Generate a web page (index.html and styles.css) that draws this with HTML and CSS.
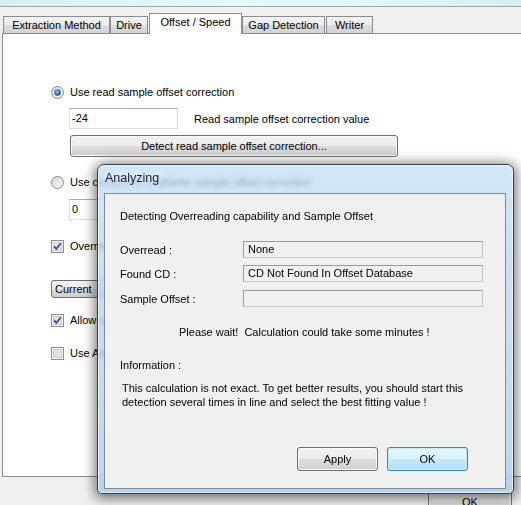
FILE: index.html
```html
<!DOCTYPE html>
<html>
<head>
<meta charset="utf-8">
<link rel="stylesheet" href="styles.css">
</head>
<body>
<div class="topbar"></div>
<div class="tabs">
  <div class="tab t1">Extraction Method</div>
  <div class="tab t2">Drive</div>
  <div class="tab sel">Offset / Speed</div>
  <div class="tab t4">Gap Detection</div>
  <div class="tab t5">Writer</div>
</div>
<div class="panel">
  <div class="row r1">
    <svg class="ico" width="13" height="13" viewBox="0 0 13 13"><defs><radialGradient id="rd" cx="45%" cy="40%" r="60%"><stop offset="0" stop-color="#9fd8ff"/><stop offset="0.6" stop-color="#2b79c9"/><stop offset="1" stop-color="#173f7e"/></radialGradient><linearGradient id="rb" x1="0" y1="0" x2="1" y2="1"><stop offset="0" stop-color="#d4d4d4"/><stop offset="1" stop-color="#fafafa"/></linearGradient></defs><circle cx="6.5" cy="6.5" r="6" fill="url(#rb)" stroke="#8a8c8e"/><circle cx="6.5" cy="6.5" r="3.2" fill="url(#rd)"/></svg>
    <span class="lbl">Use read sample offset correction</span>
  </div>
  <div class="row r2">
    <div class="input w1">-24</div>
    <span class="lbl2">Read sample offset correction value</span>
  </div>
  <div class="row r3">
    <div class="btn wide">Detect read sample offset correction...</div>
  </div>
  <div class="row r4">
    <svg class="ico" width="13" height="13" viewBox="0 0 13 13"><defs><linearGradient id="rb2" x1="0" y1="0" x2="1" y2="1"><stop offset="0" stop-color="#d4d4d4"/><stop offset="1" stop-color="#fafafa"/></linearGradient></defs><circle cx="6.5" cy="6.5" r="6" fill="url(#rb2)" stroke="#8a8c8e"/></svg>
    <span class="lbl">Use combined read/write sample offset correction</span>
  </div>
  <div class="row r5">
    <div class="input w1">0</div>
    <span class="lbl2">Combined read/write sample offset correction value</span>
  </div>
  <div class="row r6">
    <svg class="ico" width="13" height="13" viewBox="0 0 13 13"><rect x="0.5" y="0.5" width="12" height="12" fill="#f6f6f6" stroke="#8e8f8f"/><rect x="2.5" y="2.5" width="8" height="8" fill="#e4e4e4" stroke="#c9cbd0"/><path d="M3.2 6.3 L5.4 8.8 L9.8 3.3" fill="none" stroke="#3c5390" stroke-width="1.8"/></svg>
    <span class="lbl">Overread into Lead-In and Lead-Out</span>
  </div>
  <div class="row r7">
    <div class="combo">Current</div>
  </div>
  <div class="row r8">
    <svg class="ico" width="13" height="13" viewBox="0 0 13 13"><rect x="0.5" y="0.5" width="12" height="12" fill="#f6f6f6" stroke="#8e8f8f"/><rect x="2.5" y="2.5" width="8" height="8" fill="#e4e4e4" stroke="#c9cbd0"/><path d="M3.2 6.3 L5.4 8.8 L9.8 3.3" fill="none" stroke="#3c5390" stroke-width="1.8"/></svg>
    <span class="lbl">Allow speed reduction during extraction</span>
  </div>
  <div class="row r9">
    <svg class="ico" width="13" height="13" viewBox="0 0 13 13"><rect x="0.5" y="0.5" width="12" height="12" fill="#f6f6f6" stroke="#8e8f8f"/><rect x="2.5" y="2.5" width="8" height="8" fill="#e2e2e2" stroke="#c9cbd0"/></svg>
    <span class="lbl">Use AccurateRip with this drive</span>
  </div>
</div>
<div class="footer">
  <div class="btn mainok">OK</div>
</div>

<div class="dialog">
  <div class="dtitle">Analyzing</div>
  <div class="client">
    <div class="head">Detecting Overreading capability and Sample Offset</div>
    <div class="frow f1"><span class="flbl">Overread :</span><div class="field">None</div></div>
    <div class="frow f2"><span class="flbl">Found CD :</span><div class="field">CD Not Found In Offset Database</div></div>
    <div class="frow f3"><span class="flbl">Sample Offset :</span><div class="field"></div></div>
    <div class="wait">Please wait!&nbsp; Calculation could take some minutes !</div>
    <div class="info">Information :</div>
    <div class="infotext">This calculation is not exact. To get better results, you should start this<br>detection several times in line and select the best fitting value !</div>
    <div class="dbtns">
      <div class="btn dbtn">Apply</div>
      <div class="btn dbtn def">OK</div>
    </div>
  </div>
</div>
</body>
</html>
```
FILE: styles.css
```css
* { box-sizing: border-box; }
html, body { margin: 0; padding: 0; }
body {
  width: 521px; height: 505px; overflow: hidden; position: relative;
  background: #f0f0f0;
  font-family: "Liberation Sans", Arial, sans-serif;
  font-size: 11px; color: #000;
}
.topbar {
  height: 7px;
  background: linear-gradient(90deg, #d8eef0 0%, #e9f8f9 45%, #e2f5f7 70%, #d6eef2 100%);
  border-bottom: 1px solid #a3a7ab;
}
.tabs {
  display: flex; align-items: flex-end; height: 26px;
  position: relative; z-index: 2;
}
.tab {
  height: 17px; line-height: 16px; text-align: center;
  border: 1px solid #898c95; border-bottom: none;
  background: linear-gradient(#f3f3f3 0%, #ebebeb 50%, #dedede 51%, #d2d2d2 100%);
  white-space: nowrap;
}
.t1 { margin-left: 3px; width: 107px; }
.t2 { width: 38px; }
.sel {
  margin-left: 1px; width: 93px; height: 21px; margin-bottom: -1px;
  background: #fff; line-height: 17px;
}
.t4 { width: 83px; }
.t5 { margin-left: 1px; width: 47px; }
.panel {
  margin-left: 2px; width: 540px; height: 444px;
  border: 1px solid #898c95; background: #fff;
  padding-left: 48px; padding-top: 50px;
  display: flex; flex-direction: column;
}
.row { display: flex; align-items: center; white-space: nowrap; }
.ico { flex: none; }
.lbl { margin-left: 6px; }
.r1 { height: 16px; }
.r2 { margin-top: 8px; height: 21px; padding-left: 18px; }
.r3 { margin-top: 6px; height: 22px; padding-left: 19px; }
.r4 { margin-top: 17px; height: 16px; }
.r5 { margin-top: 9px; height: 21px; padding-left: 18px; }
.r6 { margin-top: 18px; height: 16px; }
.r7 { margin-top: 26px; height: 18px; }
.r8 { margin-top: 14px; height: 16px; }
.r9 { margin-top: 17px; height: 16px; }
.input {
  height: 21px; line-height: 19px; padding-left: 2px;
  border: 1px solid #dadde3; border-top-color: #abadb3;
  background: #fff;
}
.w1 { width: 109px; }
.lbl2 { margin-left: 16px; }
.btn {
  height: 22px; line-height: 20px; text-align: center;
  border: 1px solid #707070; border-radius: 3px;
  background: linear-gradient(#f2f2f2 0%, #ebebeb 50%, #dddddd 51%, #cfcfcf 100%);
  box-shadow: inset 0 0 0 1px #fbfbfb;
}
.wide { width: 328px; }
.combo {
  width: 150px; height: 18px; line-height: 16px; padding-left: 3px;
  border: 1px solid #707070; border-radius: 3px;
  background: linear-gradient(#f2f2f2 0%, #ebebeb 50%, #dddddd 51%, #cfcfcf 100%);
}
.footer { display: flex; justify-content: flex-end; padding-right: 9px; margin-top: 8px; }
.mainok { width: 84px; height: 34px; line-height: 32px; }

/* dialog */
.dialog {
  position: absolute; left: 97px; top: 164px; width: 417px; height: 330px;
  border: 1px solid #34404e; border-radius: 7px 7px 5px 5px;
  background: linear-gradient(180deg, rgba(196,222,246,0.74) 0%, rgba(184,213,241,0.74) 30%, rgba(170,204,236,0.8) 100%);
  backdrop-filter: blur(2.5px);
  -webkit-backdrop-filter: blur(2.5px);
  box-shadow: 0 2px 12px 3px rgba(0,0,0,0.5), inset 0 0 0 1px rgba(255,255,255,0.6);
  padding: 28px 7px 4px 6px;
  display: flex; flex-direction: column;
  z-index: 5;
}
.dtitle {
  position: absolute; left: 7px; top: 6px;
  font-size: 12.5px; color: #10203a;
  text-shadow: 0 0 6px rgba(255,255,255,0.9);
}
.client {
  flex: 1;
  border: 1px solid #7b8ba0; background: #f0f0f0;
  padding: 15px 0 0 15px;
  display: flex; flex-direction: column;
}
.head { height: 14px; line-height: 14px; }
.frow { display: flex; align-items: center; height: 17px; }
.f1 { margin-top: 18px; }
.f2 { margin-top: 7px; }
.f3 { margin-top: 8px; }
.flbl { width: 123px; flex: none; }
.field {
  width: 240px; height: 17px; line-height: 15px; padding-left: 4px;
  border: 1px solid #c6c6c6; border-top-color: #9a9a9a; border-left-color: #9a9a9a;
  white-space: nowrap;
}
.wait { margin-top: 18px; height: 14px; line-height: 14px; padding-left: 59px; }
.info { margin-top: 19px; height: 14px; line-height: 14px; }
.infotext { margin-top: 9px; line-height: 14px; padding-left: 2px; }
.dbtns {
  margin-top: 38px; display: flex; justify-content: flex-end; gap: 9px;
  padding-right: 37px;
}
.dbtn { width: 81px; height: 24px; line-height: 22px; }
.def {
  border-color: #3c7fb1;
  background: linear-gradient(#eaf6fd 0%, #d9f0fc 50%, #c7e8fa 51%, #b7dff5 100%);
  box-shadow: inset 0 0 0 1px #c4f0ff;
}
```
